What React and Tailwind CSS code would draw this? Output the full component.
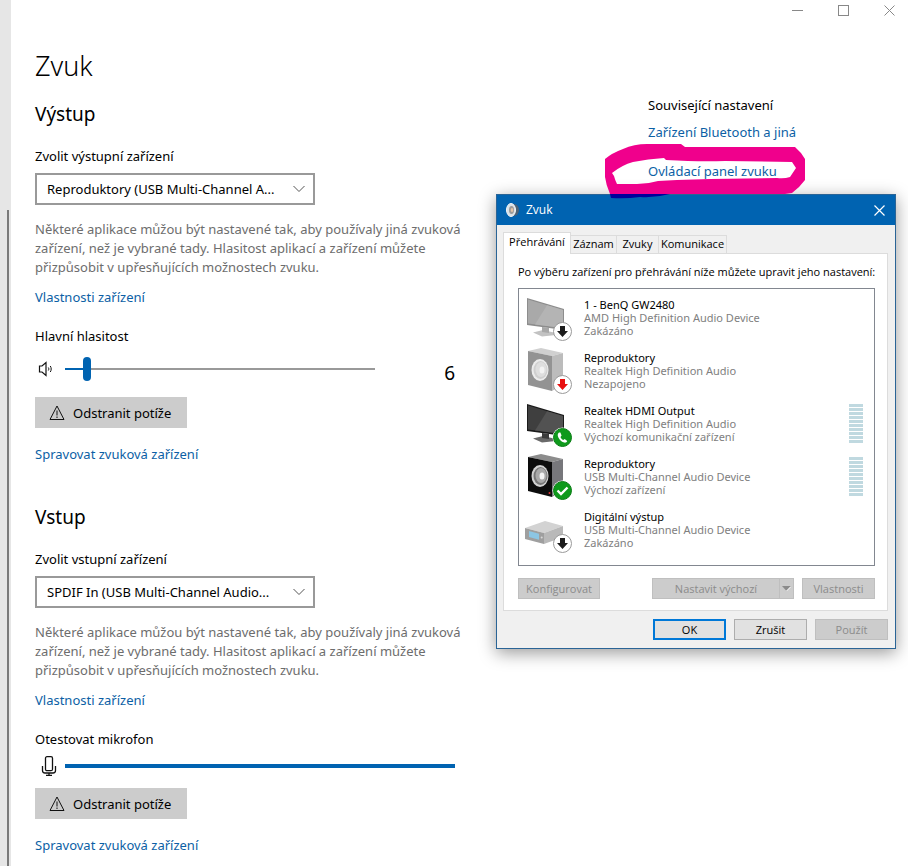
import React, { useState } from "react";

const DESCRIPTION =
  "Některé aplikace můžou být nastavené tak, aby používaly jiná zvuková zařízení, než je vybrané tady. Hlasitost aplikací a zařízení můžete přizpůsobit v upřesňujících možnostech zvuku.";

const DEVICES = [
  { name: "1 - BenQ GW2480", driver: "AMD High Definition Audio Device", status: "Zakázáno", icon: "monitor", badge: "disabled", faded: true },
  { name: "Reproduktory", driver: "Realtek High Definition Audio", status: "Nezapojeno", icon: "speaker", badge: "unplugged", faded: true },
  { name: "Realtek HDMI Output", driver: "Realtek High Definition Audio", status: "Výchozí komunikační zařízení", icon: "monitor", badge: "phone", meter: true },
  { name: "Reproduktory", driver: "USB Multi-Channel Audio Device", status: "Výchozí zařízení", icon: "speaker", badge: "check", meter: true },
  { name: "Digitální výstup", driver: "USB Multi-Channel Audio Device", status: "Zakázáno", icon: "box", badge: "disabled", faded: true },
];

const TABS = [
  { name: "Přehrávání", width: "w-[68px]" },
  { name: "Záznam", width: "w-[46px]" },
  { name: "Zvuky", width: "w-[42px]" },
  { name: "Komunikace", width: "w-[68px]" },
];

function Badge({ type }) {
  if (type === "phone" || type === "check") {
    return (
      <g>
        <circle cx="37.5" cy="34.5" r="10" fill="#fff" />
        <circle cx="37.5" cy="34.5" r="9" fill="#0f9a1c" stroke="#0a7d15" />
        {type === "check" ? (
          <path d="M32.5 34.5l3.5 3.5 6.5-6.5" fill="none" stroke="#fff" strokeWidth="2.4" />
        ) : (
          <path
            d="M34 29.5c-1.5 1-1.700 3-.5 5.200 1.300 2.500 3.500 4.500 5.800 4.900 1.500.2 2.500-.5 2.900-1.600l-2.500-2-1.400 1c-1.400-.7-2.300-1.800-2.800-3.100l1.100-1.300-1.200-3.100z"
            fill="#fff"
          />
        )}
      </g>
    );
  }
  return (
    <g>
      <circle cx="37.5" cy="34.5" r="9" fill="#fff" stroke="#9a9a9a" />
      <path
        d="M35 29h5v5h3l-5.500 6-5.500-6h3z"
        fill={type === "unplugged" ? "#e81010" : "#1c1c1c"}
      />
    </g>
  );
}

function Monitor({ faded }) {
  return (
    <g>
      <path d="M8 35.500l10-2.500 13 3v2l-14 1.500z" fill={faded ? "#c2c2c2" : "#6a6a6a"} />
      <path d="M17 30l7 1v5l-7-1z" fill={faded ? "#a8a8a8" : "#3c3c3c"} />
      <path d="M2 1l37 11v21L2 28z" fill={faded ? "#8d8d8d" : "#1b1b1b"} />
      <path d="M3 2.500L38 13v18L3 26.500z" fill={faded ? "#a9a9a9" : "#3f3f3f"} />
      <path d="M22 8.200L38 13v18L10 27.400z" fill={faded ? "#b4b4b4" : "#525252"} />
    </g>
  );
}

function Speaker({ faded }) {
  return (
    <g>
      <path d="M3 1l13-3 22 5-11 3z" fill={faded ? "#d0d0d0" : "#8c8c8c"} />
      <path d="M27 6l11-3v31l-11 7z" fill={faded ? "#bcbcbc" : "#77777b"} />
      <path d="M3 1l24 5v35L3 35z" fill={faded ? "#939393" : "#0c0c0c"} />
      <ellipse cx="15" cy="20" rx="8.500" ry="11" fill={faded ? "#ececec" : "#d2d2d2"} />
      <ellipse cx="15.500" cy="20" rx="7" ry="9" fill={faded ? "#cfcfcf" : "#777"} />
      <ellipse cx="16" cy="19.500" rx="5.500" ry="7.500" fill={faded ? "#dedede" : "#a9a9a9"} />
      <ellipse cx="17" cy="20" rx="2.500" ry="3.500" fill="#f3f3f3" />
      {!faded && <circle cx="24.500" cy="37" r="1" fill="#d33" />}
    </g>
  );
}

function Box() {
  return (
    <g>
      <path d="M0 19l20-7 18 5-19 7z" fill="#d3d3d3" />
      <path d="M19 24l19-7v11l-19 7z" fill="#b9b9b9" />
      <path d="M0 19l19 5v11L0 30z" fill="#9f9f9f" />
      <path d="M4 22l10 2.700v6L4 28z" fill="#8cc6e4" />
      <circle cx="16.700" cy="28.500" r="1" fill="#d8d8d8" />
    </g>
  );
}

function DeviceIcon({ device }) {
  return (
    <svg width="48" height="45" viewBox="0 0 48 45" className="shrink-0 overflow-visible" aria-hidden="true">
      {device.icon === "monitor" && <Monitor faded={device.faded} />}
      {device.icon === "speaker" && <Speaker faded={device.faded} />}
      {device.icon === "box" && <Box />}
      <Badge type={device.badge} />
    </svg>
  );
}

function LevelMeter() {
  return (
    <div className="flex flex-col gap-px mt-px mr-[11px] ml-auto">
      {Array.from({ length: 10 }, (_, i) => (
        <span key={i} className="w-[14px] h-[3px] bg-[#c0d9e0]" />
      ))}
    </div>
  );
}

function SettingsLink({ children }) {
  return (
    <a href="#" className="block w-fit text-[13px] leading-5 text-[#0c5fa5]">
      {children}
    </a>
  );
}

function DeviceSelect({ id, label, value }) {
  return (
    <>
      <label htmlFor={id} className="block mt-[18px] text-[13px] leading-5">
        {label}
      </label>
      <div className="relative w-[280px] mt-[7px]">
        <select
          id={id}
          className="block appearance-none w-full h-8 pl-[10px] pr-7 border-2 border-[#999] bg-white text-[13px] leading-5 text-black"
        >
          <option>{value}</option>
        </select>
        <svg width="12" height="8" viewBox="0 0 12 8" className="absolute right-[10px] top-3 pointer-events-none">
          <path d="M.5 1L6 6.500 11.500 1" fill="none" stroke="#555" />
        </svg>
      </div>
    </>
  );
}

function TroubleshootButton() {
  return (
    <button className="flex items-center gap-2 w-[152px] h-[31px] mt-[5px] pl-[14px] bg-[#ccc] text-[13px] leading-5 whitespace-nowrap">
      <svg width="16" height="16" viewBox="0 0 16 16" fill="none" stroke="#111">
        <path d="M8 1L15 14.500H1z" />
        <path d="M8 5.500v5M8 11.500v1.500" />
      </svg>
      Odstranit potíže
    </button>
  );
}

function DeviceSection({ id, title, label, value, children }) {
  return (
    <section>
      <h2 className="text-[19px] leading-7">{title}</h2>
      <DeviceSelect id={id} label={label} value={value} />
      <p className="mt-[15px] mb-[10px] text-[13px] leading-[19px] text-[#6d6d6d]">{DESCRIPTION}</p>
      <SettingsLink>Vlastnosti zařízení</SettingsLink>
      {children}
      <TroubleshootButton />
      <div className="mt-4">
        <SettingsLink>Spravovat zvuková zařízení</SettingsLink>
      </div>
    </section>
  );
}

function VolumeControl() {
  const [volume, setVolume] = useState(6);
  return (
    <>
      <label htmlFor="volume" className="block mt-[19px] text-[13px] leading-5">
        Hlavní hlasitost
      </label>
      <div className="flex items-center w-[420px] h-[46px]">
        <svg width="16" height="16" viewBox="0 0 16 16" fill="none" stroke="#111" className="ml-[3px] mr-[11px]">
          <path d="M1.500 5h2.500l4-3.500v13L4 11H1.500z" strokeWidth="1.200" />
          <path d="M10.300 6.500c.7 1 .7 2 0 3M12.300 5c1.200 2 1.200 4 0 6" />
        </svg>
        <input
          id="volume"
          type="range"
          value={volume}
          onChange={(e) => setVolume(Number(e.target.value))}
          className="appearance-none w-[310px] h-6 bg-transparent
                     [&::-webkit-slider-runnable-track]:h-[2px]
                     [&::-webkit-slider-runnable-track]:bg-[linear-gradient(to_right,#0063b1_7%,#999_7%)]
                     [&::-webkit-slider-thumb]:appearance-none
                     [&::-webkit-slider-thumb]:w-2
                     [&::-webkit-slider-thumb]:h-6
                     [&::-webkit-slider-thumb]:-mt-[11px]
                     [&::-webkit-slider-thumb]:rounded-full
                     [&::-webkit-slider-thumb]:bg-[#0063b1]"
        />
        <output htmlFor="volume" className="ml-auto pt-2 text-[19px] leading-7">
          {volume}
        </output>
      </div>
    </>
  );
}

function MicrophoneTest() {
  return (
    <>
      <div className="mt-[19px] text-[13px] leading-5">Otestovat mikrofon</div>
      <div className="flex items-center w-[420px] h-[34px]">
        <svg width="16" height="20" viewBox="0 0 16 20" fill="none" stroke="#111" className="ml-[6px] mr-2" strokeWidth="1.300">
          <rect x="4.500" y="0.700" width="7" height="14" rx="1.500" />
          <path d="M1.500 10v4.500q0 2.500 2.500 2.500h8q2.500 0 2.500-2.500V10M8 17v2.500M5 19.300h6" />
        </svg>
        <div role="meter" aria-label="Otestovat mikrofon" aria-valuenow={100} className="flex-1 h-1 bg-[#0063b1]" />
      </div>
    </>
  );
}

// Marker stroke drawn around the control panel link
function Highlight() {
  return (
    <svg
      width="210"
      height="60"
      viewBox="600 140 210 60"
      className="absolute -left-12 -top-[21px] z-20 max-w-none pointer-events-none"
      aria-hidden="true"
    >
      <path
        fillRule="evenodd"
        fill="#f0008c"
        d="M605 159Q612 153 623 149Q634 144 647 144L681 144L685 147L795 147Q801 152 805 159V180Q800 187 792 193L785 194H610Q606 185 605 177Z
           M612 173Q622 165 633 162Q648 159 664 158L666 160Q700 162 725 161L792 162L796 168L790 177Q784 179 777 178L710 179L677 180L658 181Q648 184 637 184H617Q615 180 614 176Z"
      />
      <path fill="#00009c" d="M610 194H670Q655 198 640 197Q626 199 611 198Z" />
    </svg>
  );
}

function DialogButton({ className = "", ...props }) {
  return (
    <button
      className={`h-[21px] border border-[#adadad] bg-[#e1e1e1] text-[11px] leading-none disabled:border-[#bfbfbf] disabled:bg-[#ccc] disabled:text-[#8b8b8b] ${className}`}
      {...props}
    />
  );
}

function SoundDialog() {
  const [tab, setTab] = useState("Přehrávání");
  return (
    <div
      role="dialog"
      aria-label="Zvuk"
      className="absolute left-[496px] top-[194px] z-10 w-[400px] border border-[#2a6496] bg-[#f0f0f0] font-['Open_Sans','Noto_Sans',sans-serif] text-[11px] shadow-[0_4px_16px_rgba(0,0,0,0.4)]"
    >
      <div className="flex items-center h-[30px] pl-2 pr-[10px] bg-[#0063b1] text-white">
        <svg width="15" height="16" viewBox="0 0 15 16">
          <ellipse cx="9" cy="8" rx="5" ry="6" fill="#4b6175" />
          <ellipse cx="6" cy="8" rx="4.500" ry="6.500" fill="#d9e2e8" stroke="#f4f7f9" />
          <ellipse cx="6.500" cy="8" rx="2.500" ry="4" fill="#9a9a9a" />
          <ellipse cx="7" cy="8" rx="1.300" ry="2" fill="#e3c3a6" />
        </svg>
        <span className="ml-[6px] text-[12px]">Zvuk</span>
        <button aria-label="Zavřít" className="ml-auto">
          <svg width="11" height="11" viewBox="0 0 11 11" stroke="#fff" strokeWidth="1.200">
            <path d="M.5.5l10 10M10.500.5l-10 10" />
          </svg>
        </button>
      </div>

      <div className="pt-[7px] pl-[6px] pr-[7px] pb-2">
        <div role="tablist" className="flex items-end h-[21px]">
          {TABS.map(({ name, width }) => (
            <button
              key={name}
              role="tab"
              aria-selected={name === tab}
              onClick={() => setTab(name)}
              className={`${width} whitespace-nowrap ${
                name === tab
                  ? "relative z-10 -mb-px h-[22px] pb-[3px] border border-b-0 border-[#dcdcdc] bg-white"
                  : "h-[18px] border border-l-0 border-b-0 border-[#dcdcdc]"
              }`}
            >
              {name}
            </button>
          ))}
        </div>

        <div className="border border-[#dcdcdc] bg-white pt-[11px] pl-[14px] pr-3 pb-[11px]">
          <p className="leading-[14px] whitespace-nowrap">
            Po výběru zařízení pro přehrávání níže můžete upravit jeho nastavení:
          </p>
          <ul className="h-[278px] mt-[9px] pt-2 pl-[6px] border border-[#828790] font-['Noto_Sans',sans-serif]">
            {DEVICES.map((d) => (
              <li key={d.name + d.driver} className="flex h-[53px]">
                <DeviceIcon device={d} />
                <div className="ml-[11px] pt-px leading-[13px] text-[#808080]">
                  <div className="text-black">{d.name}</div>
                  <div>{d.driver}</div>
                  <div>{d.status}</div>
                </div>
                {d.meter && <LevelMeter />}
              </li>
            ))}
          </ul>
          <div className="flex mt-3">
            <DialogButton disabled className="w-[82px]">
              Konfigurovat
            </DialogButton>
            <DialogButton disabled className="w-[127px] ml-auto border-r-0">
              Nastavit výchozí
            </DialogButton>
            <DialogButton disabled aria-label="Další možnosti" className="flex items-center justify-center w-[15px] mr-2">
              <svg width="9" height="5" viewBox="0 0 9 5">
                <path d="M0 0h9L4.500 5z" fill="#8b8b8b" />
                <path d="M9 0.500L4.500 5" stroke="#fff" />
              </svg>
            </DialogButton>
            <DialogButton disabled className="w-[73px]">
              Vlastnosti
            </DialogButton>
          </div>
        </div>

        <div className="flex justify-end gap-2 mt-2">
          <button className="w-[73px] h-[21px] border-2 border-[#0078d7] bg-[#e1e1e1] text-[11px] leading-none">OK</button>
          <DialogButton className="w-[73px]">Zrušit</DialogButton>
          <DialogButton disabled className="w-[73px]">
            Použít
          </DialogButton>
        </div>
      </div>
    </div>
  );
}

function WindowControls() {
  return (
    <div className="flex justify-end gap-[10px] h-5 pr-px">
      <button aria-label="Minimalizovat" className="flex items-center justify-center w-9">
        <svg width="11" height="11" viewBox="0 0 11 11" stroke="#888">
          <path d="M0 5.500h11" />
        </svg>
      </button>
      <button aria-label="Maximalizovat" className="flex items-center justify-center w-9">
        <svg width="11" height="11" viewBox="0 0 11 11" stroke="#888" fill="none">
          <rect x="0.500" y="0.500" width="10" height="10" />
        </svg>
      </button>
      <button aria-label="Zavřít" className="flex items-center justify-center w-9">
        <svg width="11" height="11" viewBox="0 0 11 11" stroke="#888">
          <path d="M.5.5l10 10M10.500.5l-10 10" />
        </svg>
      </button>
    </div>
  );
}

export default function App() {
  return (
    <div className="relative flex min-h-screen bg-white text-black font-['Noto_Sans','Open_Sans',sans-serif]">
      <div className="flex justify-end w-[11px] pt-[210px] pr-[2px] bg-[#e6e6e6]">
        <div className="w-[2px] bg-[#7a7a7a]" />
      </div>

      <main className="flex-1">
        <WindowControls />
        <div className="grid grid-cols-[440px_1fr] gap-x-[173px] pl-6 pt-[26px]">
          <div>
            <h1 className="mb-[14px] text-[27px] leading-10 font-light">Zvuk</h1>
            <div className="flex flex-col gap-[39px]">
              <DeviceSection
                id="output-device"
                title="Výstup"
                label="Zvolit výstupní zařízení"
                value="Reproduktory (USB Multi-Channel A..."
              >
                <VolumeControl />
              </DeviceSection>
              <DeviceSection
                id="input-device"
                title="Vstup"
                label="Zvolit vstupní zařízení"
                value="SPDIF In (USB Multi-Channel Audio..."
              >
                <MicrophoneTest />
              </DeviceSection>
            </div>
          </div>

          <aside className="pt-[49px]">
            <h3 className="mb-[7px] text-[13px] leading-5">Související nastavení</h3>
            <SettingsLink>Zařízení Bluetooth a jiná</SettingsLink>
            <div className="relative mt-[19px]">
              <SettingsLink>Ovládací panel zvuku</SettingsLink>
              <Highlight />
            </div>
          </aside>
        </div>
      </main>

      <SoundDialog />
    </div>
  );
}
